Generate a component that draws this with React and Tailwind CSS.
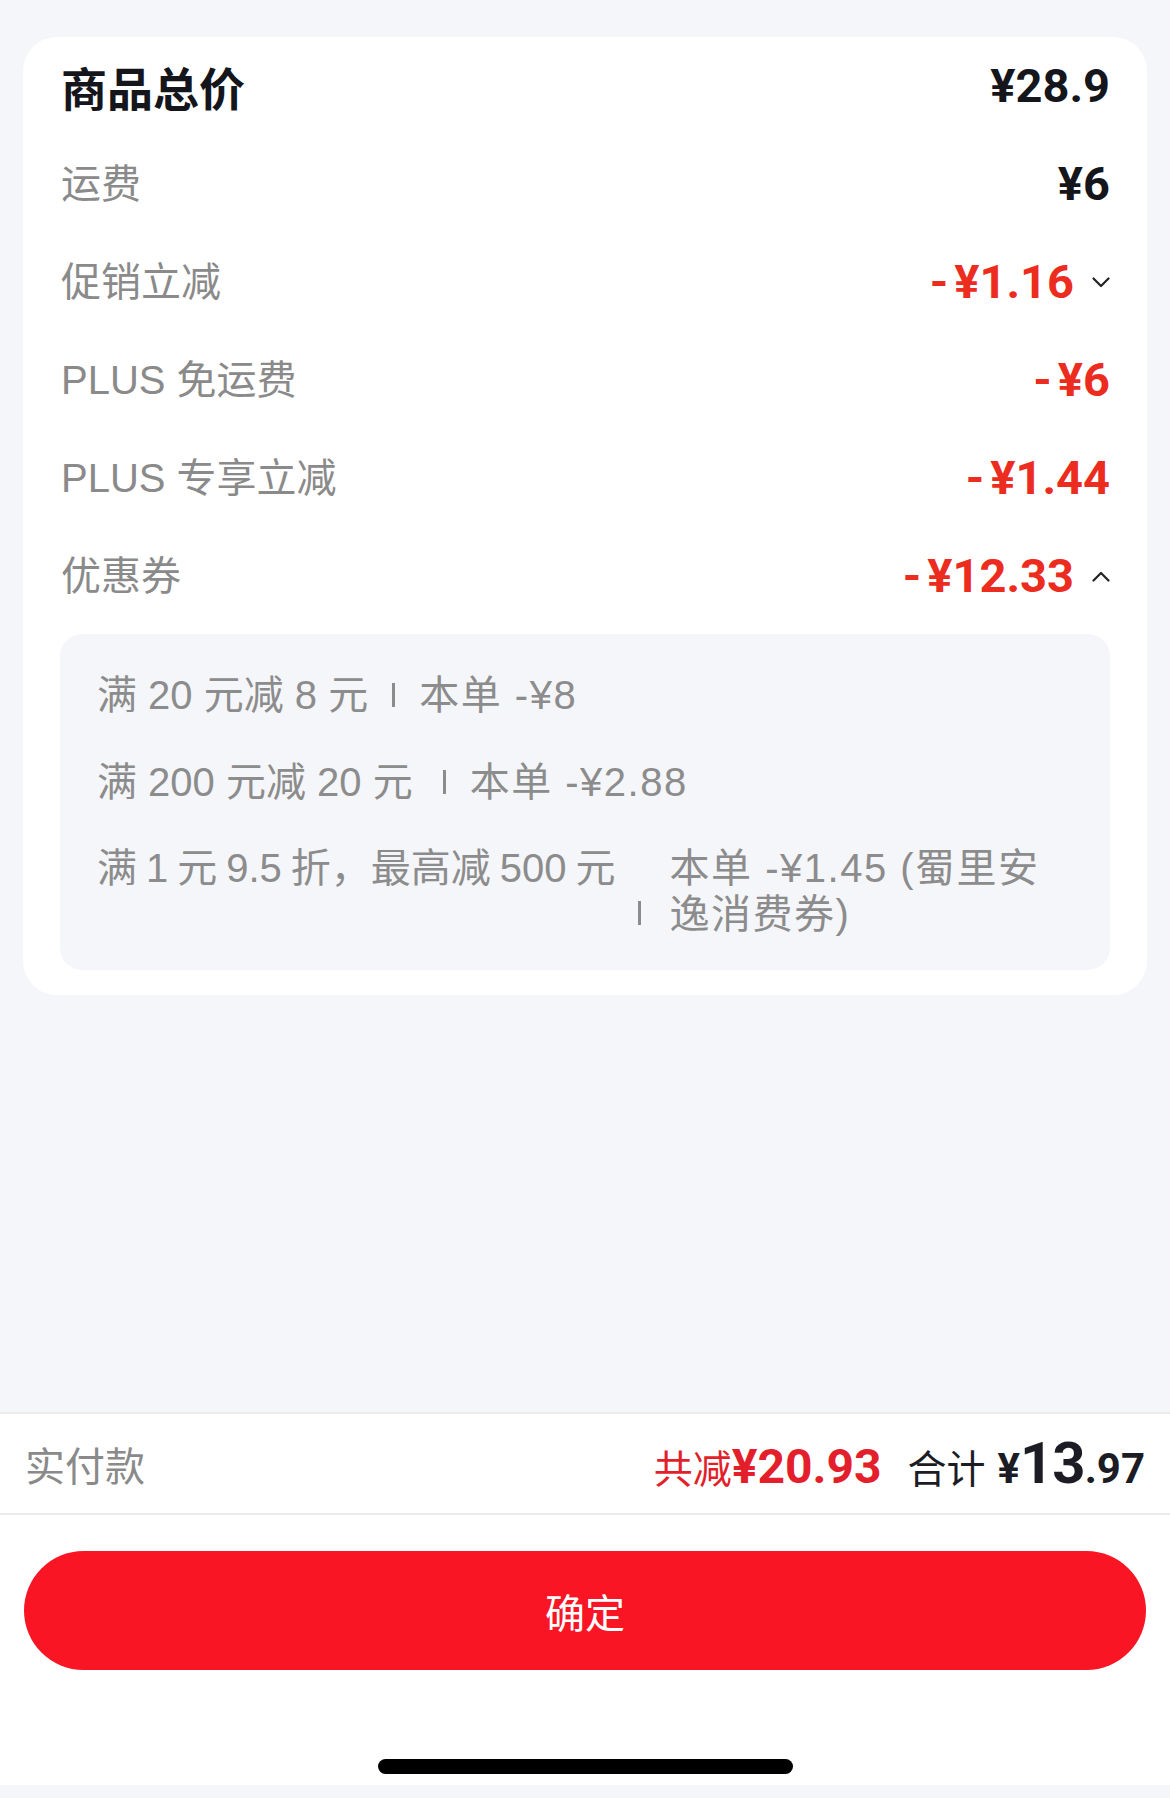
import React from "react";

const CJK = "font-['Liberation_Sans','Noto_Sans_CJK_SC',sans-serif]";
const NUM = "font-['Roboto','Noto_Sans_CJK_SC',sans-serif]";

function Chevron({ up }) {
  return (
    <svg width="18" height="11" viewBox="0 0 18 11" className="ml-[18px]">
      <polyline
        points={up ? "1.5,9.5 9,2 16.5,9.5" : "1.5,1.5 9,9 16.5,1.5"}
        fill="none"
        stroke="#222"
        strokeWidth="2.2"
        strokeLinecap="round"
        strokeLinejoin="round"
      />
    </svg>
  );
}

function Row({ label, value, red, bold, chevron }) {
  return (
    <div className="h-[98px] flex items-center justify-between">
      <span
        className={
          bold
            ? `font-['Noto_Sans_CJK_SC',sans-serif] text-[46px] font-bold text-[#15151c]`
            : `${CJK} text-[40px] text-[#8a8a8a]`
        }
      >
        {label}
      </span>
      <div className="flex items-center">
        {red && (
          <span className={`${NUM} text-[47px] font-bold text-[#ec2c1e] mr-[6px]`}>-</span>
        )}
        <span
          className={`${NUM} text-[47px] font-bold ${
            red ? "text-[#ec2c1e]" : "text-[#15151c]"
          }`}
        >
          {value}
        </span>
        {chevron === "down" && <Chevron />}
        {chevron === "up" && <Chevron up />}
      </div>
    </div>
  );
}

function Sep({ className }) {
  return <div className={`w-[3px] h-[24px] bg-[#8c8c8c] shrink-0 ${className}`} />;
}

function G() {
  return <span className="inline-block w-[9px]" />;
}

export default function App() {
  return (
    <div className={`w-[1170px] h-[1798px] bg-[#f5f6fa] flex flex-col font-['Noto_Sans_CJK_SC',sans-serif]`}>
      <div className="flex-1 pt-[37px] px-[23px]">
        <div className="bg-white rounded-[34px] pl-[38px] pr-[37px] pb-[25px]">
          <Row label="商品总价" value="¥28.9" bold />
          <Row label="运费" value="¥6" />
          <Row label="促销立减" value="¥1.16" red chevron="down" />
          <Row label="PLUS 免运费" value="¥6" red />
          <Row label="PLUS 专享立减" value="¥1.44" red />
          <Row label="优惠券" value="¥12.33" red chevron="up" />
          <div className={`mt-[9px] -ml-[1px] bg-[#f5f6fa] rounded-[22px] pl-[37px] pr-[10px] pt-[38px] pb-[33px] text-[40px] leading-[46px] text-[#8c8c8c] ${CJK}`}>
            <div className="flex items-center">
              <span className="whitespace-nowrap">满 20 元减 8 元</span>
              <Sep className="ml-[24px] mr-[24px]" />
              <span className="whitespace-nowrap tracking-[1.5px]">本单 -¥8</span>
            </div>
            <div className="flex items-center mt-[41px]">
              <span className="whitespace-nowrap">满 200 元减 20 元</span>
              <Sep className="ml-[30px] mr-[24px]" />
              <span className="whitespace-nowrap tracking-[1.5px]">本单 -¥2.88</span>
            </div>
            <div className="flex mt-[40px]">
              <span className="whitespace-nowrap">
                满<G />1<G />元<G />9.5<G />折，最高减<G />500<G />元
              </span>
              <Sep className="self-end mb-[12px] ml-[22px] mr-[29px]" />
              <span className="whitespace-nowrap tracking-[1.5px]">
                本单 -¥1.45 (蜀里安
                <br />
                逸消费券)
              </span>
            </div>
          </div>
        </div>
      </div>
      <div className="bg-white">
        <div className="border-t-2 border-[#ebebeb] h-[101px] px-[25px] flex items-center justify-between">
          <span className="text-[40px] text-[#8a8a8a]">实付款</span>
          <div className="flex items-baseline">
            <span className="text-[39px] text-[#e31f2b]">共减</span>
            <span className={`${NUM} text-[48px] font-bold text-[#e31f2b]`}>¥20.93</span>
            <span className="ml-[26px] text-[39px] text-[#1c1c24]">合计</span>
            <span className={`${NUM} ml-[12px] text-[42px] font-bold text-[#1c1c24]`}>¥</span>
            <span className={`${NUM} text-[58px] font-bold text-[#1c1c24] tracking-[-1px]`}>13</span>
            <span className={`${NUM} text-[42px] font-bold text-[#1c1c24]`}>.97</span>
          </div>
        </div>
        <div className="border-t-2 border-[#ebebeb] pt-[36px] px-[24px]">
          <div className="h-[119px] rounded-full bg-[#fa1525] flex items-center justify-center">
            <span className="text-[40px] text-white">确定</span>
          </div>
        </div>
        <div className="pt-[89px] pb-[11px] flex justify-center">
          <div className="w-[415px] h-[15px] rounded-full bg-black" />
        </div>
      </div>
      <div className="h-[13px] bg-[#f5f6fa]" />
    </div>
  );
}
